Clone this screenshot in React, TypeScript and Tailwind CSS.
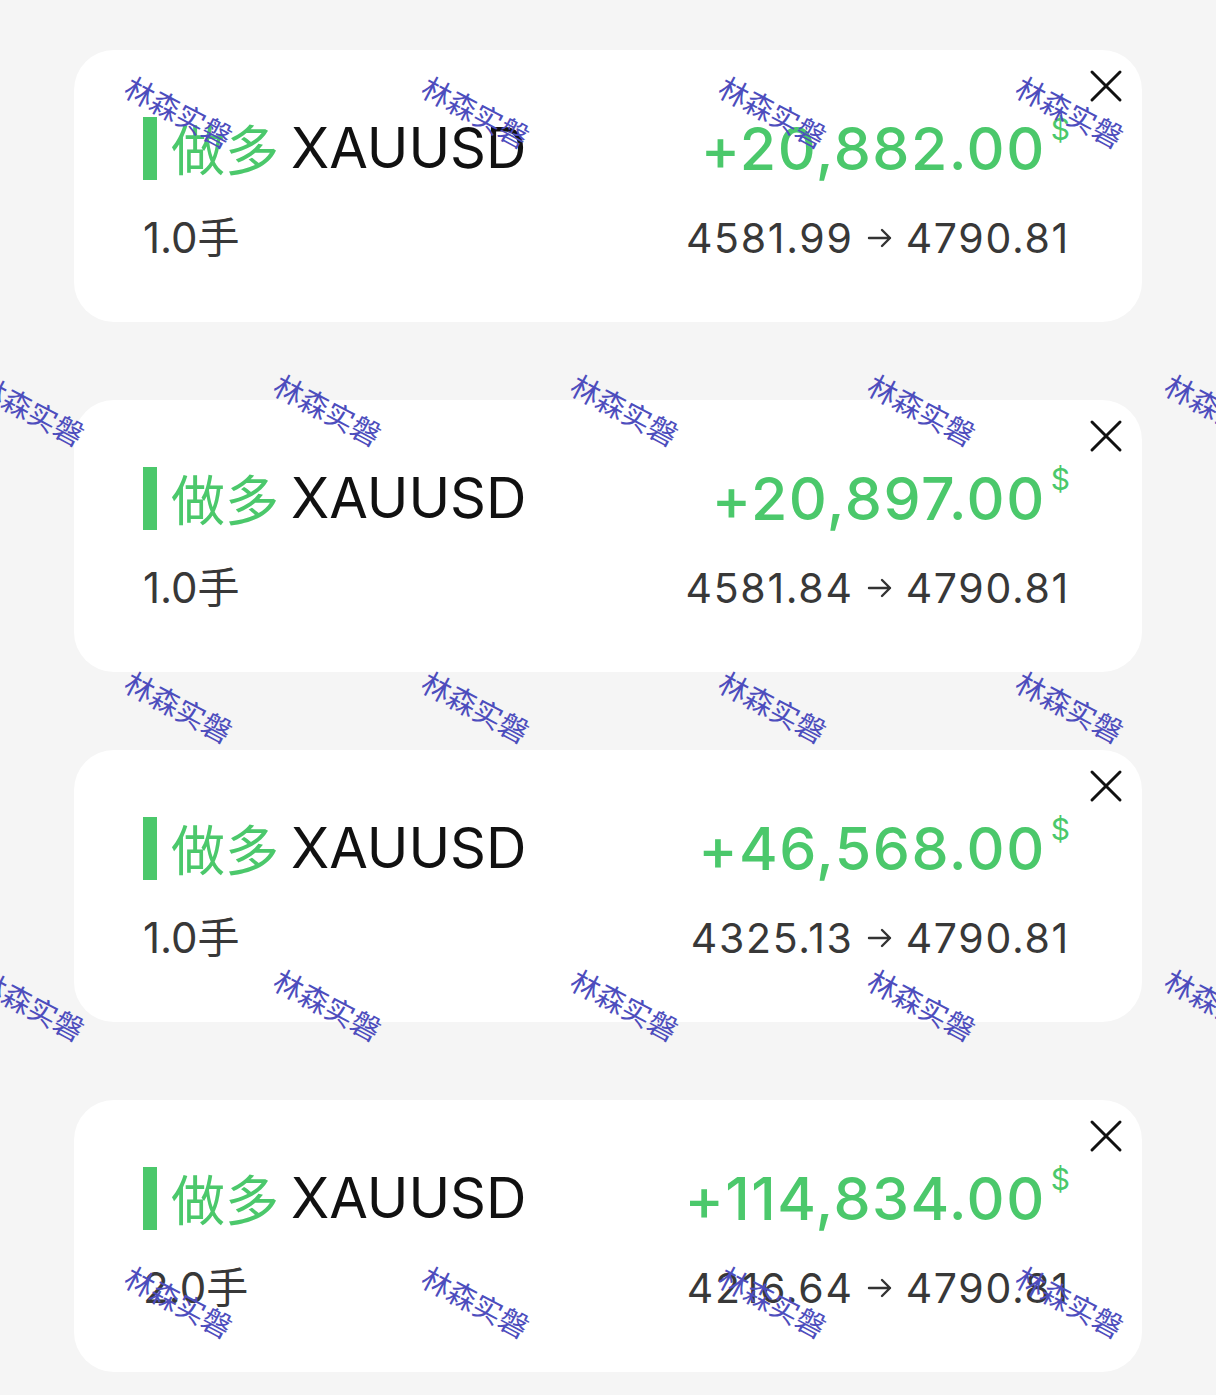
import React from "react";

type Position = {
  pnl: string;
  lots: string;
  open: string;
  close: string;
};

const positions: Position[] = [
  { pnl: "+20,882.00", lots: "1.0手", open: "4581.99", close: "4790.81" },
  { pnl: "+20,897.00", lots: "1.0手", open: "4581.84", close: "4790.81" },
  { pnl: "+46,568.00", lots: "1.0手", open: "4325.13", close: "4790.81" },
  { pnl: "+114,834.00", lots: "2.0手", open: "4216.64", close: "4790.81" },
];

const latin = "font-['Inter','Noto_Sans_CJK_SC',sans-serif]";
const cjk = "font-['Noto_Sans_CJK_SC',sans-serif]";

const CloseIcon = () => (
  <svg width="34" height="34" viewBox="0 0 34 34" fill="none" className="block">
    <path d="M3 3L31 31M31 3L3 31" stroke="#111" strokeWidth="3" strokeLinecap="round" />
  </svg>
);

const ArrowIcon = () => (
  <svg width="26" height="20" viewBox="0 0 26 20" fill="none" className="block">
    <path d="M2 10H23M15 2L23 10L15 18" stroke="#333" strokeWidth="2.4" strokeLinecap="round" strokeLinejoin="round" />
  </svg>
);

const PositionCard = ({ item }: { item: Position }) => (
  <div className="relative h-[272px] rounded-[40px] bg-white pl-[69px] pr-[72px] pt-[63px]">
    <div className="absolute right-[19px] top-[19px]">
      <CloseIcon />
    </div>
    <div className="flex h-[70px] items-center justify-between">
      <div className="flex items-center">
        <div className="h-[63px] w-[14px] bg-[#4bc86b]" />
        <span className={`${cjk} ml-[14px] text-[54px] leading-none text-[#4bc86b]`}>做多</span>
        <span className={`${latin} ml-[12px] text-[56px] leading-none text-[#111]`}>XAUUSD</span>
      </div>
      <div className="flex items-start">
        <span className={`${latin} text-[59px] font-medium leading-none tracking-[1.5px] text-[#4bc86b]`}>{item.pnl}</span>
        <span className={`${latin} ml-[5px] -mt-[5px] text-[30px] leading-none text-[#4bc86b]`}>$</span>
      </div>
    </div>
    <div className="mt-[30px] flex h-[50px] items-center justify-between">
      <span className={`${latin} text-[42px] leading-none text-[#383838]`}>{item.lots}</span>
      <div className={`${latin} flex items-center text-[41px] leading-none tracking-[1.7px] text-[#383838]`}>
        <span>{item.open}</span>
        <span className="mx-[13px]">
          <ArrowIcon />
        </span>
        <span>{item.close}</span>
      </div>
    </div>
  </div>
);

const Watermarks = () => {
  const marks: { x: number; y: number }[] = [];
  for (let r = 0; r < 5; r++) {
    const y = 111 + r * 297.5;
    const start = r % 2 === 0 ? 179 : 31;
    for (let c = 0; c < 5; c++) {
      const x = start + c * 297;
      if (x < 1300) marks.push({ x, y });
    }
  }
  return (
    <div className="pointer-events-none absolute inset-0 overflow-hidden">
      {marks.map((m, i) => (
        <span
          key={i}
          className={`${cjk} absolute whitespace-nowrap text-[29px] leading-none text-[#4d4dbd]`}
          style={{ left: m.x, top: m.y, transform: "translate(-50%, -50%) rotate(28deg)" }}
        >
          林森实磐
        </span>
      ))}
    </div>
  );
};

export default function App() {
  return (
    <div className="relative min-h-[1395px] w-full overflow-hidden bg-[#f5f5f5]">
      <div className="flex flex-col gap-[78px] px-[74px] pt-[50px]">
        {positions.map((p, i) => (
          <PositionCard key={i} item={p} />
        ))}
      </div>
      <Watermarks />
    </div>
  );
}
